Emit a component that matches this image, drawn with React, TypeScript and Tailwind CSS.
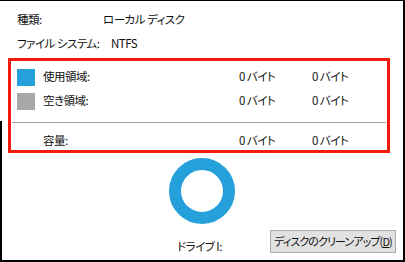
import React from "react";

const font = {
  fontFamily: '"Noto Sans CJK JP", "Noto Sans", sans-serif',
};

function InfoRow({ label, value, labelW }: { label: string; value: string; labelW: string }) {
  return (
    <div className="flex items-center h-[24px] pl-[17px]">
      <span className={`shrink-0 whitespace-nowrap ${labelW}`}>{label}</span>
      <span className="whitespace-nowrap">{value}</span>
    </div>
  );
}

function UsageRow({ swatch, label }: { swatch?: string; label: string }) {
  return (
    <div className="flex items-center h-[24px] whitespace-nowrap">
      <div className="w-[32px] shrink-0 pl-[6px] flex items-center">
        {swatch && <div className={`w-[18px] h-[17px] ${swatch}`} />}
      </div>
      <span className="w-[196px] shrink-0">{label}</span>
      <span className="w-[73px] shrink-0">0 バイト</span>
      <span>0 バイト</span>
    </div>
  );
}

export default function App() {
  return (
    <div
      className="relative w-[405px] h-[262px] bg-white text-[11.5px] tracking-[-0.5px] text-[#111] border-t border-r-2 border-b-2 border-black [font-feature-settings:'palt'] leading-none"
      style={font}
    >
      <div className="absolute left-0 top-[120px] bottom-0 w-[2px] bg-black" />

      <div className="pt-[7px]">
        <InfoRow label="種類:" value="ローカル ディスク" labelW="w-[86px]" />
        <InfoRow label="ファイル システム:" value="NTFS" labelW="w-[94px]" />
      </div>

      {/* usage box */}
      <div className="mt-[2px] ml-[8px] w-[382px] border-[3px] border-[#f2190f] pt-[4px]">
        <UsageRow swatch="bg-[#26a0da]" label="使用領域:" />
        <UsageRow swatch="bg-[#a8a8a8]" label="空き領域:" />
        <div className="mt-[9px] mx-[1px] h-px bg-[#a0a0a0]" />
        <div className="mt-[9px] h-[18px] flex items-center whitespace-nowrap">
          <span className="w-[32px] shrink-0" />
          <span className="w-[196px] shrink-0">容量:</span>
          <span className="w-[73px] shrink-0">0 バイト</span>
          <span>0 バイト</span>
        </div>
      </div>

      {/* donut */}
      <div className="flex justify-center mt-[5px]">
        <div className="w-[66px] h-[66px] rounded-full border-[12px] border-[#26a0da]" />
      </div>

      {/* bottom row */}
      <div className="flex items-end mt-[6px] pr-[7px]">
        <span className="ml-[177px] pb-[1px] whitespace-nowrap">ドライブ I:</span>
        <button className="ml-auto w-[126px] h-[23px] shrink-0 whitespace-nowrap bg-[#e1e1e1] border border-[#adadad] text-[11px] tracking-[-0.9px] text-[#111] flex items-center justify-center">
          ディスクのクリーンアップ(<span className="underline">D</span>)
        </button>
      </div>
    </div>
  );
}
